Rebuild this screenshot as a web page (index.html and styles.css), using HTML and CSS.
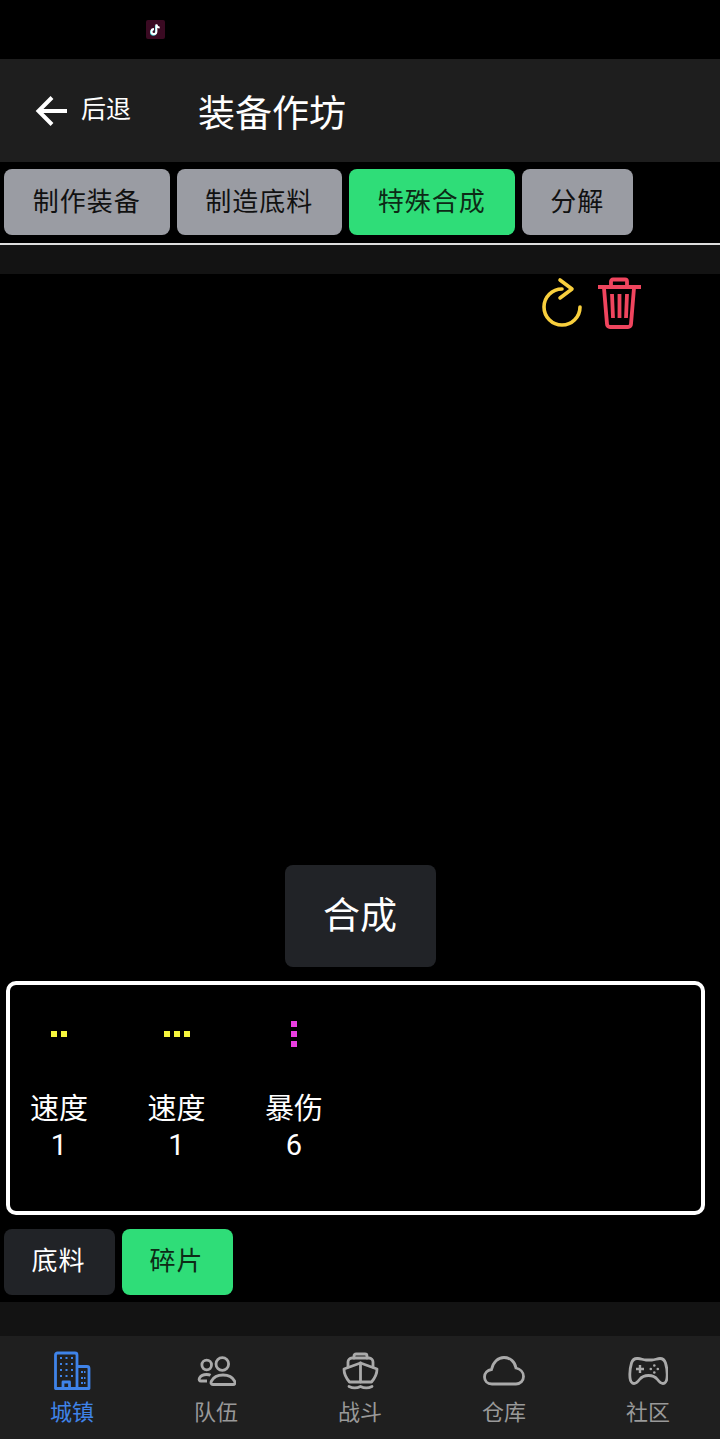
FILE: index.html
```html
<!DOCTYPE html>
<html lang="zh-CN">
<head>
    <meta charset="UTF-8">
    <meta name="viewport" content="width=device-width, initial-scale=1.0">
    <title>装备作坊</title>
    <link rel="stylesheet" href="styles.css">
</head>
<body>
    <div class="status-bar">
        <svg class="tiktok" width="19" height="19" viewBox="0 0 20 20">
            <rect width="20" height="20" rx="2" fill="#3a0a22"/>
            <path d="M11 5v7.600a2.600 2.600 0 1 1-2.600-2.600" fill="none" stroke="#4fe0e0" stroke-width="2" transform="translate(-.6 .4)"/>
            <path d="M11 4.500v7.600a2.600 2.600 0 1 1-2.600-2.600M11 5c.4 1.800 1.600 2.800 3.400 3" fill="none" stroke="#fff" stroke-width="2"/>
        </svg>
    </div>

    <header class="top-bar">
        <div class="back">
            <svg width="34" height="34" viewBox="0 0 34 34">
                <path d="M33 17H6M18 3.500 4.500 17 18 30.500" fill="none" stroke="#fff" stroke-width="4"/>
            </svg>
            <span>后退</span>
        </div>
        <h1 class="title">装备作坊</h1>
    </header>

    <nav class="tabs">
        <button class="tab">制作装备</button>
        <button class="tab">制造底料</button>
        <button class="tab active">特殊合成</button>
        <button class="tab">分解</button>
    </nav>
    <div class="divider"></div>
    <div class="band"></div>

    <main class="workshop">
        <div class="tools">
            <svg width="40" height="50" viewBox="0 0 40 50">
                <path d="M19 11A18 18 0 1 0 37 29" fill="none" stroke="#f8cf3d" stroke-width="3.600" stroke-linecap="round"/>
                <path d="M17 2l12 9-12 9" fill="none" stroke="#f8cf3d" stroke-width="3.600" stroke-linecap="round" stroke-linejoin="round"/>
            </svg>
            <svg width="44" height="52" viewBox="0 0 44 52">
                <path d="M1 9h43M14 8V3.500a2 2 0 0 1 2-2h12a2 2 0 0 1 2 2V8M7 10l3 36a3 3 0 0 0 3 3h18a3 3 0 0 0 3-3l3-36M15 16l1 24M22.500 16v24M30 16l-1 24" fill="none" stroke="#f0455e" stroke-width="3.800" stroke-linejoin="round"/>
            </svg>
        </div>

        <button class="merge">合成</button>

        <section class="slots">
            <div class="slot">
                <div class="dots yellow"><i></i><i></i></div>
                <div class="slot-name">速度</div>
                <div class="slot-name">1</div>
            </div>
            <div class="slot">
                <div class="dots yellow"><i></i><i></i><i></i></div>
                <div class="slot-name">速度</div>
                <div class="slot-name">1</div>
            </div>
            <div class="slot">
                <div class="dots pink"><i></i><i></i><i></i></div>
                <div class="slot-name">暴伤</div>
                <div class="slot-name">6</div>
            </div>
        </section>

        <div class="kinds">
            <button class="kind">底料</button>
            <button class="kind active">碎片</button>
        </div>
    </main>

    <div class="band footer-band"></div>

    <footer class="tab-bar">
        <div class="tab-item current">
            <svg width="40" height="40" viewBox="0 0 40 40">
                <g fill="none" stroke="#3f83e8" stroke-width="2.800" stroke-linejoin="round">
                    <path d="M3.500 37.500V4a2 2 0 0 1 2-2h17.500a2 2 0 0 1 2 2v33.500z"/>
                    <path d="M25 15.500h10a2 2 0 0 1 2 2v20H25"/>
                    <path d="M11 37.500V31h6.500v6.500"/>
                </g>
                <path d="M8 7h2M13.500 7h2M19 7h2M8 13h2M13.500 13h2M19 13h2M8 19h2M13.500 19h2M19 19h2M8 25h2M13.500 25h2M19 25h2M29 21h2M33.500 21h-1.500M29 27h2M33.500 27h-1.500M29 32h2M33.500 32h-1.500" stroke="#3f83e8" stroke-width="2.200"/>
            </svg>
            <span>城镇</span>
        </div>
        <div class="tab-item">
            <svg width="40" height="40" viewBox="0 0 40 40">
                <g fill="none" stroke="#aaa" stroke-width="2.800" stroke-linejoin="round">
                    <circle cx="10.700" cy="14" r="4.800"/>
                    <circle cx="26.300" cy="13" r="6.300"/>
                    <path d="M11 30H5c-1.500 0-2.500-1.200-1.500-3 1.500-2.500 4-3.500 7-3.500 1.500 0 3 .2 4 .8"/>
                    <path d="M17 33.500h20c2 0 2.500-1.500 1.500-3.500-2-4-6.500-6-11.500-6s-9.500 2-11.500 6c-1 2-.5 3.500 1.500 3.500z"/>
                </g>
            </svg>
            <span>队伍</span>
        </div>
        <div class="tab-item">
            <svg width="40" height="40" viewBox="0 0 40 40">
                <g fill="none" stroke="#aaa" stroke-width="2.800" stroke-linejoin="round" stroke-linecap="round">
                    <path d="M14 7V5a2 2 0 0 1 2-2h9a2 2 0 0 1 2 2v2"/>
                    <path d="M8 16v-5a4 4 0 0 1 4-4h17a4 4 0 0 1 4 4v5"/>
                    <path d="M20.500 12 4 18c0 4.500 2 9 5.500 13h22c3.500-4 5.500-8.500 5.500-13z"/>
                    <path d="M20.500 12v19"/>
                    <path d="M9 35.500c4 2 7.500 2 11.500 0 4 2 7.500 2 11.500 0"/>
                </g>
            </svg>
            <span>战斗</span>
        </div>
        <div class="tab-item">
            <svg width="42" height="40" viewBox="0 0 42 40">
                <path d="M9 33C4 33 1.500 29.500 1.500 26c0-4 3-7 7-7.500C10 11 15 6.500 21 6.500c6 0 11 4 12 10.500 4 .8 7.500 4 7.500 8.500 0 4-3 7.500-7.500 7.500z" fill="none" stroke="#aaa" stroke-width="2.800"/>
            </svg>
            <span>仓库</span>
        </div>
        <div class="tab-item">
            <svg width="40" height="40" viewBox="0 0 40 40">
                <g fill="none" stroke="#aaa" stroke-linejoin="round">
                    <path d="M10 7.500c3 0 5 1.500 8 1.500h6c3 0 5-1.500 8-1.500 3 0 4.500 1.500 5.500 4.500 1.500 5 2 10 1.500 15-.3 3-2 5.500-4 5.500-2.500 0-4-2-5.500-4-2-2.500-5.500-4-9-4s-7 1.500-9 4c-1.500 2-3 4-5.500 4-2 0-3.700-2.500-4-5.500-.5-5 0-10 1.500-15 1-3 2.500-4.500 5.500-4.500z" stroke-width="2.800"/>
                    <path d="M8 18h8M12 14v8" stroke-width="2.400"/>
                </g>
                <g fill="#aaa">
                    <circle cx="26.300" cy="14.500" r="1.300"/>
                    <circle cx="26.300" cy="21.500" r="1.300"/>
                    <circle cx="22.800" cy="18" r="1.300"/>
                    <circle cx="29.800" cy="18" r="1.300"/>
                </g>
            </svg>
            <span>社区</span>
        </div>
    </footer>
</body>
</html>
```

FILE: styles.css
```css
* {
    box-sizing: border-box;
}
body {
    font-family: Roboto, "Noto Sans CJK SC", sans-serif;
    margin: 0;
    width: 720px;
    height: 1439px;
    background: #000;
    color: #fff;
    display: flex;
    flex-direction: column;
    overflow: hidden;
}
button {
    font-family: inherit;
    border: none;
    border-radius: 8px;
    padding: 0;
}
.status-bar {
    height: 59px;
    padding: 20px 0 0 146px;
}
.tiktok {
    display: block;
}
.top-bar {
    height: 103px;
    background: #1e1e1e;
    display: flex;
    align-items: center;
    padding-left: 34px;
}
.back {
    display: flex;
    align-items: center;
    gap: 13px;
    width: 164px;
    font-size: 25px;
}
.back svg {
    flex: none;
}
.back span {
    padding-bottom: 7px;
}
.title {
    margin: 0;
    font-size: 37px;
    font-weight: 400;
}
.tabs {
    display: flex;
    gap: 7px;
    padding: 7px 4px 8px;
}
.tab {
    height: 66px;
    padding: 0 28.750px 6px;
    font-size: 26px;
    letter-spacing: 1px;
    background: #9a9ca3;
    color: #111;
}
.tab.active,
.kind.active {
    background: #2fdd78;
    color: #0d2a16;
}
.divider {
    height: 2px;
    background: #ddd;
}
.band {
    height: 29px;
    background: #131313;
}
.footer-band {
    height: 34px;
}
.workshop {
    flex: 1;
    display: flex;
    flex-direction: column;
}
.tools {
    display: flex;
    justify-content: flex-end;
    gap: 14px;
    padding: 4px 79px 0 0;
}
.tools svg {
    overflow: visible;
}
.merge {
    width: 151px;
    height: 102px;
    margin: auto auto 14px;
    padding-bottom: 6px;
    background: #212327;
    color: #fff;
    font-size: 37px;
}
.slots {
    height: 234px;
    margin: 0 15px 0 6px;
    border: 4px solid #fff;
    border-radius: 10px;
    padding: 17px 0 0;
    display: flex;
    gap: 17.500px;
}
.slot {
    width: 100px;
    text-align: center;
}
.slot:first-child {
    margin-left: -1px;
}
.dots {
    height: 64px;
    margin-bottom: 25px;
    display: flex;
    justify-content: center;
    align-items: center;
    gap: 4px;
}
.dots i {
    width: 6px;
    height: 6px;
}
.dots.yellow i {
    background: #f5f53c;
}
.dots.pink {
    flex-direction: column;
}
.dots.pink i {
    background: #e93ee0;
}
.slot-name {
    font-size: 29px;
    line-height: 36px;
}
.kinds {
    display: flex;
    gap: 7px;
    padding: 14px 4px 7px;
}
.kind {
    width: 111px;
    height: 66px;
    padding: 0 2px 8px 0;
    background: #212327;
    color: #fff;
    font-size: 26px;
    letter-spacing: 1px;
}
.tab-bar {
    height: 103px;
    background: #1f1f1f;
    display: grid;
    grid-template-columns: repeat(5, 144px);
}
.tab-item {
    display: flex;
    flex-direction: column;
    align-items: center;
    padding-top: 15px;
    font-size: 22px;
    line-height: 32px;
    color: #999;
}
.tab-item svg {
    display: block;
    height: 40px;
    margin-bottom: 6px;
}
.tab-item.current {
    color: #3f83e8;
}
```
